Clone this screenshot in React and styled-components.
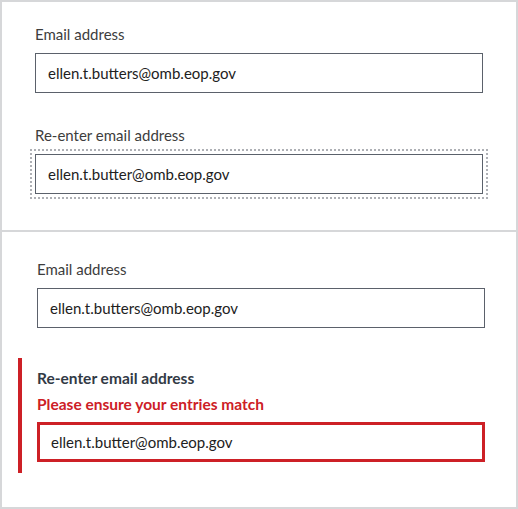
import React from "react";
import styled, { createGlobalStyle } from "styled-components";

const GlobalStyle = createGlobalStyle`
	html, body {
		margin: 0;
		padding: 0;
		background: #ffffff;
	}
	* {
		box-sizing: border-box;
	}
`;

const Frame = styled.div`
	width: 518px;
	height: 509px;
	border: 2px solid #d6d7d9;
	background: #ffffff;
	display: flex;
	flex-direction: column;
	font-family: "Lato", "Liberation Sans", sans-serif;
	color: #212121;
`;

const Panel = styled.section`
	padding: ${(p) => (p.$top ? "22px 33px 0 33px" : "27px 31px 0 35px")};
	height: ${(p) => (p.$top ? "230px" : "auto")};
	flex: ${(p) => (p.$top ? "none" : "1")};
	border-bottom: ${(p) => (p.$top ? "2px solid #d6d7d9" : "none")};
`;

const Field = styled.div`
	display: flex;
	flex-direction: column;
	margin-top: ${(p) => p.$gap || 0}px;
`;

const Label = styled.label`
	font-size: ${(p) => (p.$bold ? 15.5 : 15)}px;
	line-height: 20px;
	font-weight: ${(p) => (p.$bold ? 700 : 400)};
	color: ${(p) => (p.$bold ? "#323a45" : "#3d3d3d")};
	margin-bottom: ${(p) => (p.$bold ? 6 : 9)}px;
`;

const ErrorText = styled.span`
	font-size: 15.5px;
	line-height: 20px;
	font-weight: 700;
	color: #cd2026;
	margin-bottom: 8px;
`;

const Input = styled.div`
	width: 448px;
	height: 40px;
	display: flex;
	align-items: center;
	padding-left: ${(p) => (p.$error ? 11 : 12)}px;
	font-size: 15px;
	color: #212121;
	border: ${(p) => (p.$error ? "3px solid #cd2026" : "1px solid #5b616b")};
	outline: ${(p) => (p.$focus ? "2px dotted #aeb0b5" : "none")};
	outline-offset: 3px;
`;

const ErrorGroup = styled.div`
	margin-top: 30px;
	margin-left: -19px;
	border-left: 4px solid #cd2026;
	padding: 10px 0 11px 15px;
	display: flex;
	flex-direction: column;
`;

export default function App() {
	return (
		<>
			<GlobalStyle />
			<Frame>
				<Panel $top>
					<Field>
						<Label>Email address</Label>
						<Input>ellen.t.butters@omb.eop.gov</Input>
					</Field>
					<Field $gap={32}>
						<Label>Re-enter email address</Label>
						<Input $focus>ellen.t.butter@omb.eop.gov</Input>
					</Field>
				</Panel>
				<Panel>
					<Field>
						<Label>Email address</Label>
						<Input>ellen.t.butters@omb.eop.gov</Input>
					</Field>
					<ErrorGroup>
						<Label $bold>Re-enter email address</Label>
						<ErrorText>Please ensure your entries match</ErrorText>
						<Input $error>ellen.t.butter@omb.eop.gov</Input>
					</ErrorGroup>
				</Panel>
			</Frame>
		</>
	);
}
